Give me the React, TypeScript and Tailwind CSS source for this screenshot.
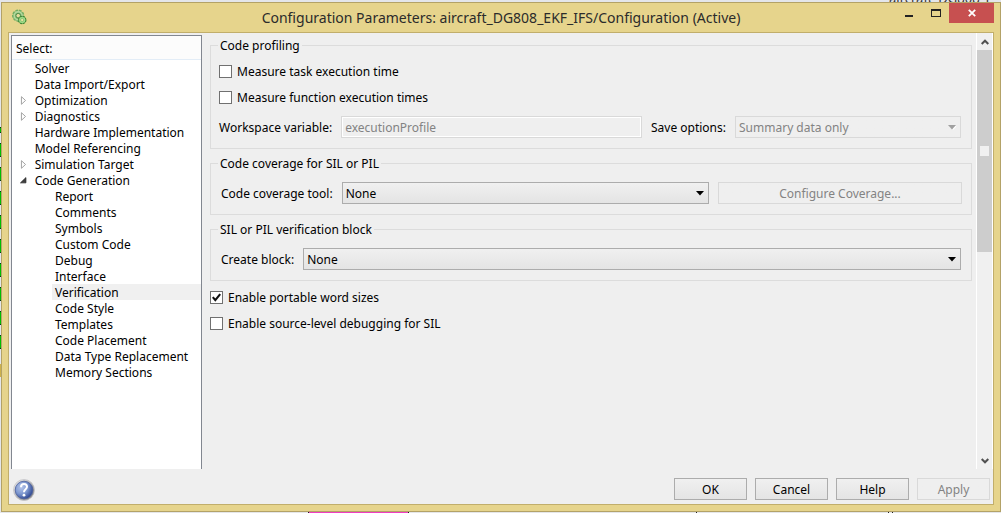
import { useState } from "react";
import type { ReactNode } from "react";

type NavItem = { label: string; state?: "open" | "closed"; child?: boolean };

const NAV: NavItem[] = [
  { label: "Solver" },
  { label: "Data Import/Export" },
  { label: "Optimization", state: "closed" },
  { label: "Diagnostics", state: "closed" },
  { label: "Hardware Implementation" },
  { label: "Model Referencing" },
  { label: "Simulation Target", state: "closed" },
  { label: "Code Generation", state: "open" },
  { label: "Report", child: true },
  { label: "Comments", child: true },
  { label: "Symbols", child: true },
  { label: "Custom Code", child: true },
  { label: "Debug", child: true },
  { label: "Interface", child: true },
  { label: "Verification", child: true },
  { label: "Code Style", child: true },
  { label: "Templates", child: true },
  { label: "Code Placement", child: true },
  { label: "Data Type Replacement", child: true },
  { label: "Memory Sections", child: true },
];

function GearsIcon() {
  return (
    <svg viewBox="0 0 16 16" className="size-4" aria-hidden="true">
      <circle cx="7.2" cy="6.7" r="5.3" fill="#8cc077" stroke="#74ae64" strokeWidth="1.8" strokeDasharray="2.6 1" />
      <circle cx="7.2" cy="6.7" r="4" fill="none" stroke="#b4d9a0" strokeWidth="1.4" />
      <circle cx="7.2" cy="6.7" r="2.3" fill="#e6dc9c" stroke="#4c8a48" />
      <circle cx="11.2" cy="11" r="3.7" fill="#6fb85c" stroke="#3f8638" strokeWidth="1.2" strokeDasharray="2.2 0.7" />
      <circle cx="11.2" cy="11" r="2.4" fill="none" stroke="#a4dc8c" strokeWidth="1.3" />
      <circle cx="11.2" cy="11" r="1.2" fill="#e6e0a4" />
    </svg>
  );
}

function HelpIcon() {
  return (
    <svg viewBox="0 0 22 22" className="size-[22px]" aria-hidden="true">
      <defs>
        <linearGradient id="ring" x1="0" y1="0" x2="1" y2="1">
          <stop offset="0" stopColor="#f4f4f4" />
          <stop offset="1" stopColor="#6e6e72" />
        </linearGradient>
        <radialGradient id="ball" cx="0.35" cy="0.35" r="0.75">
          <stop offset="0" stopColor="#b4c5ea" />
          <stop offset="0.5" stopColor="#7d97cf" />
          <stop offset="1" stopColor="#223a86" />
        </radialGradient>
      </defs>
      <circle cx="11" cy="11" r="10.5" fill="url(#ring)" stroke="#c4c4c8" strokeWidth="0.8" />
      <circle cx="11" cy="11" r="8.8" fill="url(#ball)" stroke="#4a5f9d" strokeWidth="0.8" />
      <path d="M8 8.2C8 3.8 14 4.2 14 7.8C14 10.3 11 10.2 11 13.2" fill="none" stroke="#fff" strokeWidth="2" />
      <circle cx="11" cy="16.2" r="1.4" fill="#fff" />
    </svg>
  );
}

function Expander({ state }: { state?: "open" | "closed" }) {
  return (
    <svg viewBox="0 0 8 10" className="h-[10px] w-2" aria-hidden="true">
      {state === "closed" && <path d="M1.5 1.5L5.8 5.5L1.5 9.5Z" fill="#fff" stroke="#a0a0a0" />}
      {state === "open" && <path d="M6.2 2.5V8H0.5Z" fill="#404040" stroke="#262626" strokeWidth="0.8" />}
    </svg>
  );
}

function Group({ title, children }: { title: string; children: ReactNode }) {
  return (
    <fieldset className="border border-[#dcdcdc] px-2 pb-[10px]">
      <legend className="-ml-px h-4 px-[2px] leading-[18px]">{title}</legend>
      {children}
    </fieldset>
  );
}

function Check({ id, label, initial = false }: { id: string; label: string; initial?: boolean }) {
  const [on, setOn] = useState(initial);
  return (
    <div className="flex h-[26px] items-center gap-[5px]">
      <span className="relative flex">
        <input
          id={id}
          type="checkbox"
          checked={on}
          onChange={(e) => setOn(e.target.checked)}
          className="size-[13px] appearance-none border border-[#707070] bg-white"
        />
        {on && (
          <svg viewBox="0 0 13 13" className="pointer-events-none absolute inset-0" aria-hidden="true">
            <path d="M2.8 6.2L5.3 9.2L10.2 3.2" fill="none" stroke="#111" strokeWidth="2.1" />
          </svg>
        )}
      </span>
      <label htmlFor={id} className="pt-[2px]">{label}</label>
    </div>
  );
}

function Choice({ id, value, disabled = false }: { id: string; value: string; disabled?: boolean }) {
  return (
    <span className="relative flex flex-1">
      <select
        id={id}
        disabled={disabled}
        className="h-[22px] w-full appearance-none border border-[#acacac] bg-linear-to-b from-[#f0f0f0] to-[#e4e4e4] pt-[2px] pl-[3px] text-black disabled:border-[#d9d9d9] disabled:from-[#efefef] disabled:to-[#efefef] disabled:text-[#838383] disabled:opacity-100"
      >
        <option>{value}</option>
      </select>
      <svg viewBox="0 0 8 5" className="pointer-events-none absolute top-[9px] right-[5px] h-[5px] w-2" aria-hidden="true">
        {disabled && <path d="M1 1H9L5 5Z" fill="#fff" />}
        <path d="M0 0H8L4 4.5Z" fill={disabled ? "#a0a0a0" : "#000"} />
      </svg>
    </span>
  );
}

const BUTTON =
  "h-[22px] border border-[#acacac] bg-linear-to-b from-[#f0f0f0] to-[#e4e4e4] pt-[2px] leading-4 disabled:border-[#d9d9d9] disabled:from-[#efefef] disabled:to-[#efefef] disabled:text-[#838383]";

function Backdrop() {
  return (
    <svg className="absolute inset-0 h-full w-full" aria-hidden="true">
      <rect width="100%" height="100%" fill="#e4e6ea" />
      {[127, 143, 167, 191, 215, 239, 263, 287, 311, 335].map((y, i) => (
        <g key={y}>
          <rect x="0" y={y} width="1" height={i === 0 ? 6 : 14} fill="#053a12" />
          <rect x="0" y={y + 1} width="1" height={i === 0 ? 4 : 12} fill="#00be00" />
        </g>
      ))}
      <rect x="0" y="364" width="1" height="13" fill="#cdb14c" />
      <rect x="308" y="510" width="101" height="3" fill="#f03cc0" />
      <path d="M308 512h1v1h-1zM408 512h1v1h-1zM696 512h1v1h-1zM888 512h1v1h-1zM892 512h1v1h-1z" fill="#222" />
      <text x="889" y="3" fontSize="13" fill="#333">aircraft_DG808_I</text>
    </svg>
  );
}

export default function App() {
  const [selected, setSelected] = useState("Verification");
  return (
    <div className="relative flex h-screen flex-col pt-[2px] pb-px pl-px font-['Noto_Sans',sans-serif] text-[12px] leading-4 text-black">
      <Backdrop />
      <div className="relative flex min-h-0 flex-1 flex-col border border-[#b3a267] bg-[#e6d48c] pr-[6px] pb-[6px] pl-[6px]">
        <header className="flex h-[29px] shrink-0 items-start">
          <div className="flex w-[99px] pt-[6px] pl-[3px]">
            <GearsIcon />
          </div>
          <h1 className="flex-1 pt-[5px] text-center text-[14px] leading-5 text-[#2b2b2b]">
            Configuration Parameters: aircraft_DG808_EKF_IFS/Configuration (Active)
          </h1>
          <div className="flex w-[99px] justify-end">
            <button aria-label="Minimize" className="flex h-5 w-[27px] items-center justify-center">
              <svg viewBox="0 0 8 10" className="h-[10px] w-2"><path d="M0 7h8v2H0z" fill="#222" /></svg>
            </button>
            <button aria-label="Maximize" className="flex h-5 w-[27px] items-center justify-center">
              <svg viewBox="0 0 10 8" className="h-2 w-[10px]"><path d="M0 0h10v8H0zM1 2v5h8V2z" fill="#222" fillRule="evenodd" /></svg>
            </button>
            <button aria-label="Close" className="flex h-5 w-[45px] items-center justify-center bg-[#c75050]">
              <svg viewBox="0 0 8 8" className="size-2"><path d="M0.8 0.8L7.2 7.2M7.2 0.8L0.8 7.2" stroke="#fff" strokeWidth="1.8" /></svg>
            </button>
          </div>
        </header>

        <main className="flex min-h-0 flex-1 flex-col border border-[#c1ae6b] bg-[#efefef]">
          <div className="flex min-h-0 flex-1">
            <nav className="mt-[2px] ml-[2px] w-[191px] shrink-0 border border-b-0 border-[#828790] bg-white">
              <h2 className="h-6 border-b border-[#e3edf7] bg-[#fcfcfc] pt-[5px] pl-1">Select:</h2>
              <ul>
                {NAV.map((item) => (
                  <li key={item.label} className={item.child ? "pl-10" : "flex items-center pl-2"}>
                    {!item.child && <Expander state={item.state} />}
                    <button
                      onClick={() => setSelected(item.label)}
                      className={
                        "block h-4 w-full text-left leading-[18px] " +
                        (item.child ? "pl-[3px] " : "pl-[7px] ") +
                        (selected === item.label ? "bg-[#f0f0f0]" : "")
                      }
                    >
                      {item.label}
                    </button>
                  </li>
                ))}
              </ul>
            </nav>

            <section className="min-w-0 flex-1 pt-1 pr-1 pl-2">
              <Group title="Code profiling">
                <div className="pt-[5px]">
                  <Check id="task" label="Measure task execution time" />
                  <Check id="func" label="Measure function execution times" />
                </div>
                <div className="flex items-center gap-[9px] pt-[6px] pr-[2px] whitespace-nowrap">
                  <label htmlFor="workspace" className="pt-[2px]">Workspace variable:</label>
                  <input
                    id="workspace"
                    disabled
                    defaultValue="executionProfile"
                    className="h-[22px] min-w-0 flex-1 border border-[#d9d9d9] bg-[#efefef] px-[3px] text-[#838383] inset-ring inset-ring-white"
                  />
                  <label htmlFor="save" className="pt-[2px]">Save options:</label>
                  <span className="flex w-[226px]">
                    <Choice id="save" value="Summary data only" disabled />
                  </span>
                </div>
              </Group>

              <div className="pt-[6px]">
                <Group title="Code coverage for SIL or PIL">
                  <div className="flex items-center gap-[9px] pt-[11px] pr-px pl-[2px]">
                    <label htmlFor="tool" className="pt-[2px]">Code coverage tool:</label>
                    <Choice id="tool" value="None" />
                    <button disabled className={BUTTON + " w-[244px]"}>Configure Coverage...</button>
                  </div>
                </Group>
              </div>

              <div className="pt-[6px]">
                <Group title="SIL or PIL verification block">
                  <div className="flex items-center gap-[9px] pt-[11px] pr-[2px] pl-[2px]">
                    <label htmlFor="block" className="pt-[2px]">Create block:</label>
                    <Choice id="block" value="None" />
                  </div>
                </Group>
              </div>

              <div className="pt-[3px]">
                <Check id="portable" label="Enable portable word sizes" initial />
                <Check id="debug" label="Enable source-level debugging for SIL" />
              </div>
            </section>

            <div className="flex w-[17px] shrink-0 flex-col border-x border-white bg-[#f0f0f0]">
              <button aria-label="Scroll up" className="flex h-[17px] items-center justify-center">
                <svg viewBox="0 0 8 6" className="h-[6px] w-2"><path d="M0.7 5L4 1.7L7.3 5" fill="none" stroke="#505050" strokeWidth="2" /></svg>
              </button>
              <div className="flex h-[202px] items-center justify-center bg-[#cdcdcd]">
                <span className="h-[10px] w-[9px] bg-[#f0f0f0]" />
              </div>
              <div className="flex-1" />
              <button aria-label="Scroll down" className="flex h-[17px] items-center justify-center">
                <svg viewBox="0 0 8 6" className="h-[6px] w-2"><path d="M0.7 1L4 4.3L7.3 1" fill="none" stroke="#505050" strokeWidth="2" /></svg>
              </button>
            </div>
          </div>

          <footer className="flex h-[35px] shrink-0 items-start gap-2 pt-[9px] pr-[3px] pl-1">
            <button aria-label="Open help" className="mr-auto pt-px">
              <HelpIcon />
            </button>
            <button className={BUTTON + " w-[73px]"}>OK</button>
            <button className={BUTTON + " w-[73px]"}>Cancel</button>
            <button className={BUTTON + " w-[73px]"}>Help</button>
            <button disabled className={BUTTON + " w-[73px]"}>Apply</button>
          </footer>
        </main>
      </div>
    </div>
  );
}
